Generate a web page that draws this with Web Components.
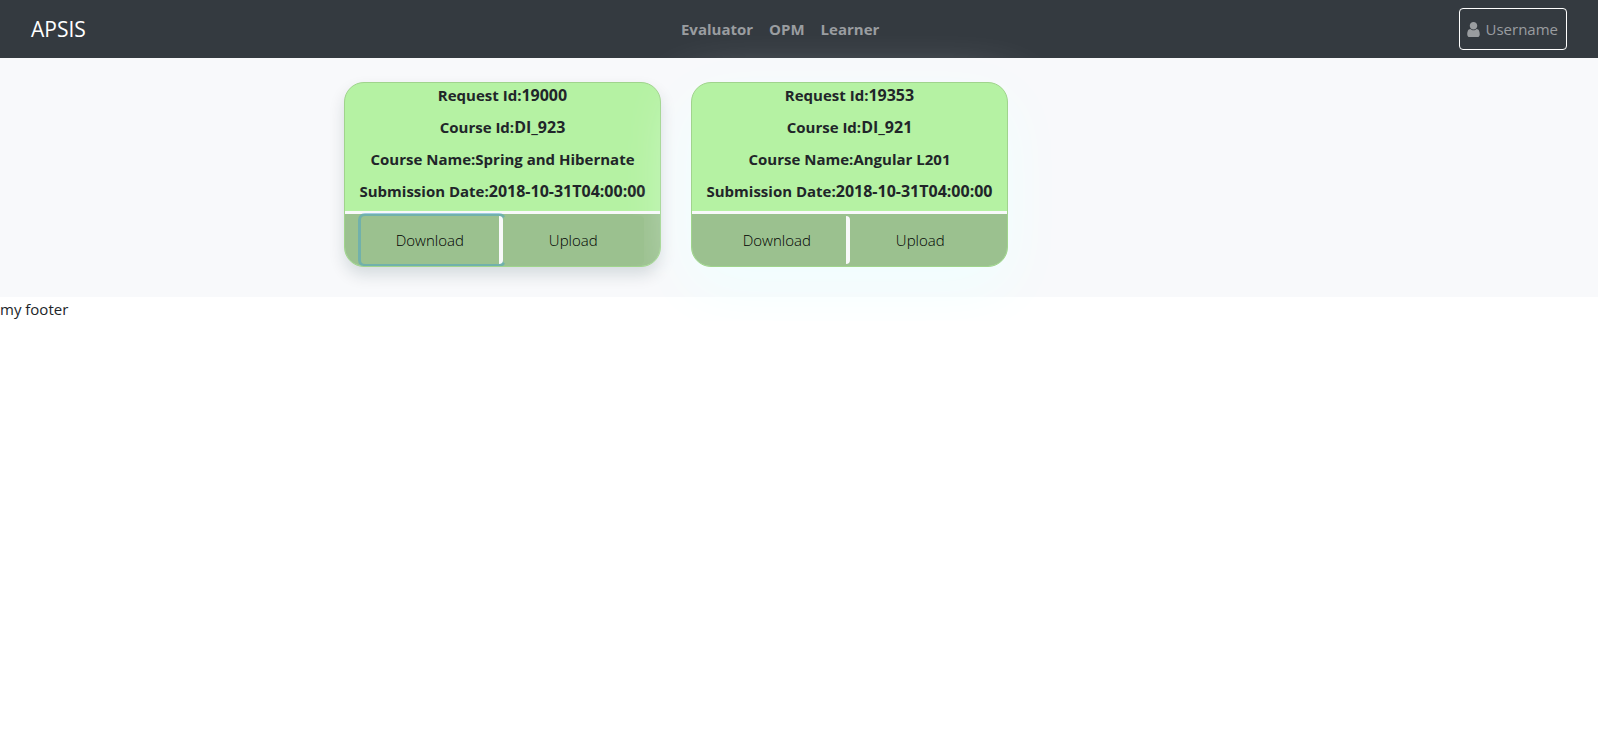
<!DOCTYPE html>
<html lang="en">
<head>
<meta charset="utf-8">
<title>APSIS</title>
<meta name="viewport" content="width=device-width, initial-scale=1">
<style>
body { margin: 0; background: #fff; color: #212529; font: 15px/24px "Open Sans", "Noto Sans", sans-serif; }
</style>
</head>
<body>
<apsis-app></apsis-app>

<template id="app-tpl">
<style>
:host { display: block; }
main { display: flex; flex-wrap: wrap; gap: 30px; padding: 24px 16px 30px calc(50% - 455px); background: #f8f9fb; }
</style>
<apsis-header></apsis-header>
<main>
  <request-card request-id="19000" course-id="DI_923" course-name="Spring and Hibernate" submitted="2018-10-31T04:00:00" active></request-card>
  <request-card request-id="19353" course-id="DI_921" course-name="Angular L201" submitted="2018-10-31T04:00:00" glow></request-card>
</main>
<apsis-footer>my footer</apsis-footer>
</template>

<template id="header-tpl">
<style>
:host { display: block; background: #343a40; }
header { display: flex; align-items: center; justify-content: space-between; padding: 8px 31px; }
a { color: #9a9da0; text-decoration: none; }
.brand { color: #fff; font-size: 21px; line-height: 30px; margin-right: 16px; }
nav { display: flex; gap: 16px; font-weight: 700; }
.user { display: flex; align-items: center; gap: 6px; box-sizing: border-box; height: 42px; padding: 0 8px 0 7px; border: 1px solid #fff; border-radius: 4px; background: none; color: #9a9da0; font: inherit; }
svg { display: block; fill: currentColor; }
</style>
<header>
  <a class="brand" href="#">APSIS</a>
  <nav aria-label="Roles"><a href="#evaluator">Evaluator</a><a href="#opm">OPM</a><a href="#learner">Learner</a></nav>
  <button class="user" type="button"><svg width="13" height="15" viewBox="0 0 1280 1536" aria-hidden="true"><path d="M1280 1271c0 146-96 265-213 265H213C96 1536 0 1417 0 1271c0-263 65-567 327-567 81 79 191 128 313 128s232-49 313-128c262 0 327 304 327 567zM1024 384c0 212-172 384-384 384S256 596 256 384 428 0 640 0s384 172 384 384z"/></svg><span>Username</span></button>
</header>
</template>

<template id="card-tpl">
<style>
:host { display: block; box-sizing: border-box; width: 317px; overflow: hidden; border: 1px solid #a0d48d; border-radius: 20px; background: #b5f2a3; text-align: center; box-shadow: 0 8px 16px rgba(0, 40, 50, .14); }
:host([glow]) { box-shadow: 0 20px 60px azure; }
p { height: 24px; margin: 0 0 8px; font-weight: 700; white-space: nowrap; }
.code { font-size: 16px; }
.actions { display: grid; grid-template-columns: 1fr 1fr; padding: 2px 16px; border-top: 3px solid #f8f9fa; background: #9bc18f; }
button { height: 48px; padding: 0; border: 0; border-radius: 4px; background: #9bc18f; color: #000; font: inherit; font-weight: 300; }
.download { border-right: 4px solid #f8f9fa; }
.upload { position: relative; }
:host([active]) .download { box-shadow: 0 0 0 3px rgba(72, 161, 200, .5); }
</style>
<p>Request Id:<span class="code" data-f="request-id"></span></p>
<p>Course Id:<span class="code" data-f="course-id"></span></p>
<p>Course Name:<span data-f="course-name"></span></p>
<p>Submission Date:<span class="code" data-f="submitted"></span></p>
<div class="actions"><button class="download" type="button">Download</button><button class="upload" type="button">Upload</button></div>
</template>

<template id="footer-tpl">
<style>:host { display: block; }</style>
<footer><slot></slot></footer>
</template>

<script>
class TemplateElement extends HTMLElement {
  connectedCallback() {
    if (this.shadowRoot) return;
    const root = this.attachShadow({ mode: 'open' });
    root.append(document.getElementById(this.constructor.template).content.cloneNode(true));
    root.querySelectorAll('[data-f]').forEach(el => { el.textContent = this.getAttribute(el.dataset.f); });
  }
}
customElements.define('apsis-header', class extends TemplateElement { static template = 'header-tpl'; });
customElements.define('request-card', class extends TemplateElement { static template = 'card-tpl'; });
customElements.define('apsis-footer', class extends TemplateElement { static template = 'footer-tpl'; });
customElements.define('apsis-app', class extends TemplateElement { static template = 'app-tpl'; });
</script>
</body>
</html>
